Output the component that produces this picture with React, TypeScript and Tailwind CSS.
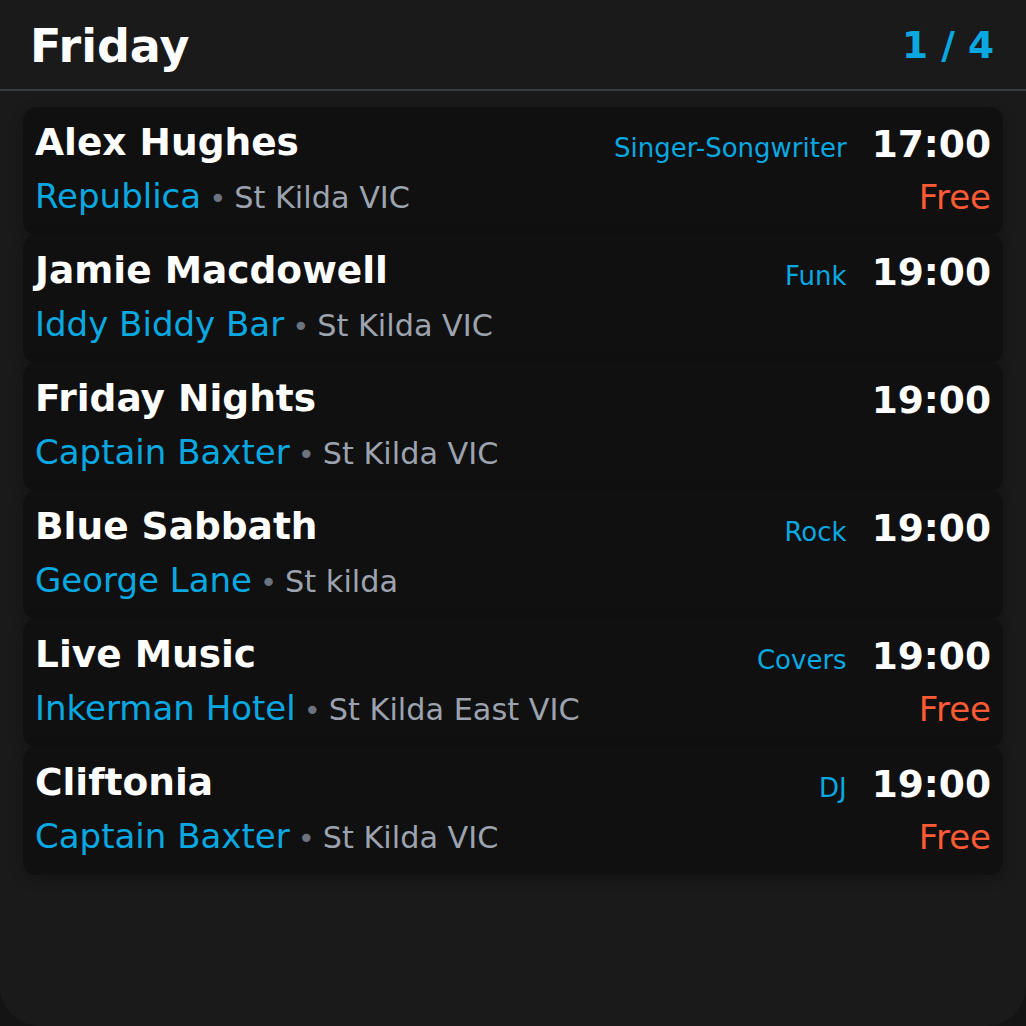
import React from "react";

type Gig = {
  title: string;
  genre?: string;
  time: string;
  venue: string;
  location: string;
  free?: boolean;
};

const gigs: Gig[] = [
  { title: "Alex Hughes", genre: "Singer-Songwriter", time: "17:00", venue: "Republica", location: "St Kilda VIC", free: true },
  { title: "Jamie Macdowell", genre: "Funk", time: "19:00", venue: "Iddy Biddy Bar", location: "St Kilda VIC" },
  { title: "Friday Nights", time: "19:00", venue: "Captain Baxter", location: "St Kilda VIC" },
  { title: "Blue Sabbath", genre: "Rock", time: "19:00", venue: "George Lane", location: "St kilda" },
  { title: "Live Music", genre: "Covers", time: "19:00", venue: "Inkerman Hotel", location: "St Kilda East VIC", free: true },
  { title: "Cliftonia", genre: "DJ", time: "19:00", venue: "Captain Baxter", location: "St Kilda VIC", free: true },
];

function Card({ g }: { g: Gig }) {
  return (
    <div className="flex h-[128px] flex-col rounded-[14px] bg-[#101010] px-3 pt-[12px] shadow-[0_4px_14px_rgba(0,0,0,0.25)]">
      <div className="flex h-[55px] items-start justify-between">
        <div className="mt-[1px] text-[37.5px] font-bold leading-[44px] text-white">{g.title}</div>
        <div className="mt-[3px] flex items-baseline gap-[25px]">
          {g.genre && <span className="text-[26px] leading-[30px] text-[#0aa8e0]">{g.genre}</span>}
          <span className="text-[37.5px] font-bold leading-[44px] text-white">{g.time}</span>
        </div>
      </div>
      <div className="flex items-start justify-between">
        <div className="mt-[2px] flex items-baseline whitespace-nowrap leading-[40px]">
          <span className="text-[34px] text-[#0aa8e0]">{g.venue}</span>
          <span className="mx-[8px] text-[29px] text-[#6b7280]">•</span>
          <span className="text-[30.3px] text-[#9ca3af]">{g.location}</span>
        </div>
        {g.free && <div className="mt-[3px] text-[34px] leading-[40px] text-[#ff5a36]">Free</div>}
      </div>
    </div>
  );
}

export default function App() {
  return (
    <div className="min-h-screen bg-[#141414]" style={{ fontFamily: '"DejaVu Sans", sans-serif' }}>
      <div className="flex h-[1026px] flex-col overflow-hidden rounded-b-[40px] bg-[#1a1a1a]">
        <div className="flex h-[91px] items-start justify-between border-b-2 border-[#363b45] pl-[30px] pr-[32px]">
          <div className="mt-[20px] text-[46px] font-bold leading-[52px] text-white">Friday</div>
          <div className="mt-[23px] text-[37.5px] font-bold leading-[44px] text-[#0aa8e0]">1 / 4</div>
        </div>
        <div className="flex flex-col px-[23px] pt-[16px]">
          {gigs.map((g, i) => (
            <Card key={i} g={g} />
          ))}
        </div>
      </div>
    </div>
  );
}
